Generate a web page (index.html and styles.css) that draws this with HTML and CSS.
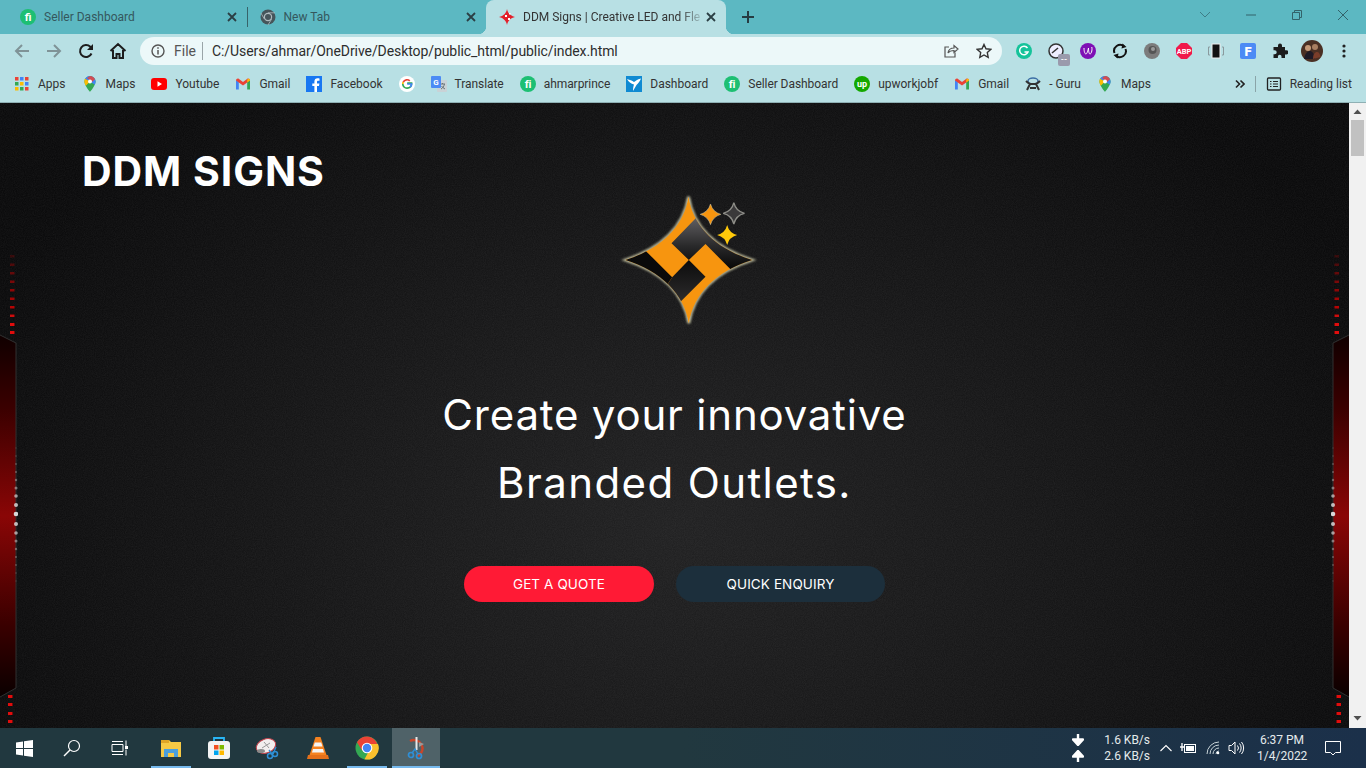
FILE: index.html
```html
<!DOCTYPE html>
<html lang="en">
<head>
	<meta charset="UTF-8">
	<title>DDM Signs | Creative LED and Flex</title>
	<link rel="stylesheet" href="styles.css">
</head>
<body>

	<!-- Shared gradients and filters -->
	<svg class="icon-defs" aria-hidden="true">
		<defs>
			<linearGradient id="panel-red" x1="0" y1="0" x2="0" y2="1">
				<stop offset="0" stop-color="#100000"/>
				<stop offset="0.2" stop-color="#3a0000"/>
				<stop offset="0.5" stop-color="#8a0606"/>
				<stop offset="0.8" stop-color="#3a0000"/>
				<stop offset="1" stop-color="#0a0000"/>
			</linearGradient>
			<linearGradient id="star-dark" gradientUnits="userSpaceOnUse" x1="0" y1="110" x2="0" y2="268">
				<stop offset="0" stop-color="#636164"/>
				<stop offset="0.55" stop-color="#2a2a2b"/>
				<stop offset="1" stop-color="#060606"/>
			</linearGradient>
			<linearGradient id="star-square" gradientUnits="userSpaceOnUse" x1="0" y1="240" x2="0" y2="365">
				<stop offset="0" stop-color="#0c0c0c"/>
				<stop offset="1" stop-color="#2c2b2c"/>
			</linearGradient>
			<clipPath id="star-clip">
				<path d="M264 50C278 140 345 205 455 240 345 275 280 340 265 430 250 340 183 275 75 240 183 205 250 140 264 50z"/>
			</clipPath>
			<filter id="grain" x="0" y="0" width="100%" height="100%">
				<feTurbulence type="fractalNoise" baseFrequency="0.9" numOctaves="2" seed="4"/>
				<feColorMatrix values="0 0 0 0 1  0 0 0 0 1  0 0 0 0 1  0.5 0 0 0 -0.12"/>
			</filter>
			<filter id="logo-glow" x="-20%" y="-20%" width="140%" height="140%">
				<feGaussianBlur stdDeviation="3.5"/>
			</filter>
			<filter id="soft" x="-50%" y="-50%" width="200%" height="200%">
				<feGaussianBlur stdDeviation="0.5"/>
			</filter>
		</defs>
	</svg>

	<!-- Favicon sprite -->
	<svg class="icon-sprite" aria-hidden="true">
		<symbol id="i-fiverr" viewBox="0 0 16 16">
			<circle cx="8" cy="8" r="8" fill="#1dbf73"/>
			<text x="8" y="12" font-family="Roboto, sans-serif" font-size="11" font-weight="700" fill="#fff" text-anchor="middle">fi</text>
		</symbol>
		<symbol id="i-maps" viewBox="0 0 16 16">
			<path d="M8 0a5.6 5.6 0 0 0-5.6 5.6C2.400 9.500 8 16 8 16s5.600-6.500 5.600-10.400A5.600 5.600 0 0 0 8 0z" fill="#34a853"/>
			<path d="M3 3l5 2.600 4.800 3.200c.5-1.100.8-2.200.8-3.200A5.600 5.600 0 0 0 8 0C6 0 4 1.200 3 3z" fill="#4285f4"/>
			<path d="M8 0c2.200 0 4.200 1.300 5 3.200L10 6 5 2z" fill="#ea4335" opacity=".85"/>
			<path d="M3 2.800a5.600 5.600 0 0 0-.6 2.800c0 1.300.6 2.800 1.400 4.200L8 5.600z" fill="#fbbc04"/>
			<circle cx="8" cy="5.600" r="2" fill="#fff"/>
		</symbol>
		<symbol id="i-gmail" viewBox="0 0 16 16">
			<path d="M1 13.500V4l2.800 2v7.500H1.600a.6.600 0 0 1-.6 0z" fill="#4285f4"/>
			<path d="M15 13.500V4l-2.800 2v7.500h2.200a.6.600 0 0 0 .6 0z" fill="#34a853"/>
			<path d="M1 4.500C1 2.800 2.800 2 4 3l4 3 4-3c1.200-1 3-.2 3 1.500L12.200 6.500 8 9.600 3.800 6.500z" fill="#ea4335"/>
			<path d="M12.200 3.800V6.500L15 4.500c0-1.700-1.800-2.500-2.800-.7z" fill="#fbbc04"/>
		</symbol>
		<symbol id="i-close" viewBox="0 0 10 10">
			<path d="M1 1l8 8M9 1L1 9" stroke="#2b3f44" stroke-width="1.800" fill="none"/>
		</symbol>
	</svg>

	<!-- Tab strip -->
	<header class="tabstrip">
		<div class="tab">
			<svg class="favicon"><use href="#i-fiverr"/></svg>
			<span class="tab-title">Seller Dashboard</span>
			<svg class="tab-close"><use href="#i-close"/></svg>
		</div>
		<div class="tab tab-split">
			<svg class="favicon" viewBox="0 0 16 16"><circle cx="8" cy="8" r="7.500" fill="#46555a"/><circle cx="8" cy="8" r="4.200" fill="#b0bcc0"/><circle cx="8" cy="8" r="3" fill="#46555a"/><path d="M8 3.800h7M4.400 10.100L.9 4M11.600 10.100L8 16" stroke="#b0bcc0" stroke-width=".8" fill="none"/></svg>
			<span class="tab-title">New Tab</span>
			<svg class="tab-close"><use href="#i-close"/></svg>
		</div>
		<div class="tab tab-active">
			<svg class="favicon" viewBox="0 0 16 16"><path d="M8 0c.6 4 3.500 7 8 8-4.500 1-7.400 4-8 8-.6-4-3.500-7-8-8 4.500-1 7.400-4 8-8z" fill="#e3202a"/><path d="M6 6h2v2H6zM9 9h2v2H9zM10 4h1.500v1.500H10z" fill="#fff"/></svg>
			<span class="tab-title tab-title-fade">DDM Signs | Creative LED and Fle</span>
			<svg class="tab-close"><use href="#i-close"/></svg>
		</div>
		<span class="new-tab">
			<svg width="14" height="14" viewBox="0 0 14 14"><path d="M7 1v12M1 7h12" stroke="#263c42" stroke-width="2" fill="none"/></svg>
		</span>
		<div class="window-controls">
			<svg width="46" height="16" viewBox="0 0 46 16"><path d="M18 5l5 5 5-5" stroke="#3f7d86" fill="none"/></svg>
			<svg width="46" height="16" viewBox="0 0 46 16"><path d="M18 8h10" stroke="#33626a" fill="none"/></svg>
			<svg width="46" height="16" viewBox="0 0 46 16"><path d="M18.500 5.500h7v7h-7zM20.500 5.500v-2h7v7h-2" stroke="#33626a" fill="none"/></svg>
			<svg width="46" height="16" viewBox="0 0 46 16"><path d="M18 3l10 10M28 3L18 13" stroke="#33626a" fill="none"/></svg>
		</div>
	</header>

	<!-- Toolbar -->
	<div class="toolbar">
		<span class="tool-btn"><svg width="18" height="16" viewBox="0 0 18 16"><path d="M16 8H3M9 2L3 8l6 6" stroke="#7f9397" stroke-width="2" fill="none"/></svg></span>
		<span class="tool-btn"><svg width="18" height="16" viewBox="0 0 18 16"><path d="M2 8h13M9 2l6 6-6 6" stroke="#7f9397" stroke-width="2" fill="none"/></svg></span>
		<span class="tool-btn"><svg width="16" height="16" viewBox="0 0 16 16"><path d="M13.500 10.500A6 6 0 1 1 12.300 3.800L14 5.500" stroke="#1c1c1c" stroke-width="2" fill="none"/><path d="M15 1v6H9z" fill="#1c1c1c"/></svg></span>
		<span class="tool-btn"><svg width="18" height="18" viewBox="0 0 18 18"><path d="M1.500 9L9 2l7.500 7M4 8v8h3.500v-4h3v4H14V8" stroke="#1c1c1c" stroke-width="2" fill="none"/></svg></span>
		<div class="omnibox">
			<svg class="omni-info" width="14" height="14" viewBox="0 0 14 14"><circle cx="7" cy="7" r="6" stroke="#555" stroke-width="1.400" fill="none"/><path d="M7 6v4.500M7 3.200v1.600" stroke="#555" stroke-width="1.500"/></svg>
			<span class="omni-scheme">File</span>
			<span class="omni-url">C:/Users/ahmar/OneDrive/Desktop/public_html/public/index.html</span>
			<svg class="omni-share" width="16" height="16" viewBox="0 0 16 16"><path d="M12 9.500V14H2V4h4" stroke="#555" stroke-width="1.200" fill="none"/><path d="M5 10c.5-3.500 3-5 6-5V2.500L15 6l-4 3.500V7.500C8.500 7.500 6.500 8 5 10z" stroke="#555" stroke-width="1.200" fill="none"/></svg>
			<svg class="omni-star" width="16" height="16" viewBox="0 0 16 16"><path d="M8 1.500l2 4.300 4.700.6-3.400 3.200.9 4.700L8 12l-4.200 2.300.9-4.700L1.300 6.400 6 5.800z" stroke="#333" stroke-width="1.400" fill="none"/></svg>
		</div>
		<div class="extensions">
			<span class="ext"><svg width="16" height="16" viewBox="0 0 16 16"><circle cx="8" cy="8" r="8" fill="#15c39a"/><path d="M11.500 5A4.300 4.300 0 1 0 12 9H8.500" stroke="#fff" stroke-width="1.500" fill="none"/></svg></span>
			<span class="ext"><svg width="16" height="16" viewBox="0 0 16 16"><circle cx="8" cy="8" r="7" fill="#eef" stroke="#333" stroke-width="1.500"/><path d="M4 10l6-5" stroke="#333" stroke-width="1.500"/></svg><b class="ext-badge">--</b></span>
			<span class="ext"><svg width="16" height="16" viewBox="0 0 16 16"><circle cx="8" cy="8" r="8" fill="#7e0fb5"/><path d="M4 5c0 4 1 6 2 6s2-4 2.500-6c0 3 .5 6 1.500 6s2.500-3 1.800-7" stroke="#fff" fill="none"/></svg></span>
			<span class="ext"><svg width="16" height="16" viewBox="0 0 16 16"><path d="M2.500 10A6 6 0 0 1 12 3.300M13.500 6A6 6 0 0 1 4 12.700" stroke="#111" stroke-width="2" fill="none"/><path d="M10.500 0.500l4 3.500-5 1.500zM5.500 15.500l-4-3.500 5-1.500z" fill="#111"/></svg></span>
			<span class="ext"><svg width="16" height="16" viewBox="0 0 16 16"><circle cx="8" cy="8" r="8" fill="#7c7c7c"/><circle cx="8.500" cy="7" r="4" fill="#555"/><circle cx="9" cy="6" r="2" fill="#9a9a9a"/></svg></span>
			<span class="ext"><svg width="16" height="16" viewBox="0 0 16 16"><path d="M5 0h6l5 5v6l-5 5H5l-5-5V5z" fill="#f0194b"/><text x="8" y="10.500" font-family="Roboto, sans-serif" font-size="7.500" font-weight="700" fill="#fff" text-anchor="middle">ABP</text></svg></span>
			<span class="ext"><svg width="18" height="16" viewBox="0 0 18 16"><rect x="5" y="1" width="8" height="14" fill="#111" stroke="#eee"/><path d="M3 4H1.500v8H3M15 4h1.500v8H15" stroke="#8a9a9e" fill="none"/></svg></span>
			<span class="ext"><svg width="16" height="16" viewBox="0 0 16 16"><rect width="16" height="16" rx="2" fill="#4c8bf5"/><text x="8" y="13" font-family="Roboto, sans-serif" font-size="13" font-weight="900" fill="#fff" text-anchor="middle">F</text></svg></span>
			<span class="ext"><svg width="16" height="16" viewBox="0 0 16 16"><path d="M6 2.500a2 2 0 0 1 4 0V4h3v3.200h1.300a2.100 2.100 0 0 1 0 4.200H13V15H9.500v-1.400a1.800 1.800 0 0 0-3.600 0V15H1.500v-3.800h1.200a2 2 0 0 0 0-4H1.500V4H6z" fill="#1c1c1c"/></svg></span>
			<span class="ext"><svg width="22" height="22" viewBox="0 0 22 22"><circle cx="11" cy="11" r="11" fill="#4a3024"/><circle cx="7" cy="8" r="3" fill="#c59a78"/><circle cx="14" cy="7" r="3" fill="#a97f62"/><path d="M3 19c1-6 4-8 6-8s4 2 5 8z" fill="#1e1a26"/><path d="M12 19c0-5 2-7 4-7s3 2 3.500 5z" fill="#7a3d2a"/></svg></span>
			<span class="ext"><svg width="4" height="14" viewBox="0 0 4 14"><circle cx="2" cy="2" r="1.600" fill="#222"/><circle cx="2" cy="7" r="1.600" fill="#222"/><circle cx="2" cy="12" r="1.600" fill="#222"/></svg></span>
		</div>
	</div>

	<!-- Bookmarks -->
	<nav class="bookmarks">
		<a class="bookmark">
			<svg class="favicon" viewBox="0 0 16 16"><path d="M1 1h3.500v3.500H1z" fill="#ea4335"/><path d="M6 1h3.500v3.500H6z" fill="#4285f4"/><path d="M11 1h3.500v3.500H11z" fill="#ea4335"/><path d="M1 6h3.500v3.500H1z" fill="#34a853"/><path d="M6 6h3.500v3.500H6z" fill="#fbbc04"/><path d="M11 6h3.500v3.500H11z" fill="#4285f4"/><path d="M1 11h3.500v3.500H1z" fill="#fbbc04"/><path d="M6 11h3.500v3.500H6z" fill="#34a853"/><path d="M11 11h3.500v3.500H11z" fill="#ea4335"/></svg>
			Apps
		</a>
		<a class="bookmark"><svg class="favicon"><use href="#i-maps"/></svg>Maps</a>
		<a class="bookmark">
			<svg class="favicon" viewBox="0 0 16 16"><rect y="2" width="16" height="12" rx="3" fill="#f00"/><path d="M6.500 5.200L11 8l-4.500 2.800z" fill="#fff"/></svg>
			Youtube
		</a>
		<a class="bookmark"><svg class="favicon"><use href="#i-gmail"/></svg>Gmail</a>
		<a class="bookmark">
			<svg class="favicon" viewBox="0 0 16 16"><rect width="16" height="16" fill="#1877f2"/><path d="M11 16v-6h2l.4-2.500H11V6c0-.8.3-1.200 1.200-1.200h1.300V2.500c-.5-.1-1.200-.2-1.900-.2-2 0-3.200 1.200-3.200 3.300v1.900H6.300V10h2.100v6z" fill="#fff"/></svg>
			Facebook
		</a>
		<a class="bookmark">
			<svg class="favicon" viewBox="0 0 16 16"><circle cx="8" cy="8" r="8" fill="#fff"/><path d="M8.200 7.200h4.400c.3 2.800-1.600 5-4.500 5A4.200 4.200 0 0 1 3.800 8" stroke="#34a853" stroke-width="1.700" fill="none"/><path d="M3.800 8c0-.7.2-1.400.5-2" stroke="#fbbc04" stroke-width="1.700" fill="none"/><path d="M4.300 6a4.200 4.200 0 0 1 6.500-1.200" stroke="#ea4335" stroke-width="1.700" fill="none"/><path d="M8.200 8h4.400c0 1.200-.5 2.300-1.400 3" stroke="#4285f4" stroke-width="1.700" fill="none"/></svg>
		</a>
		<a class="bookmark bookmark-tight">
			<svg class="favicon" viewBox="0 0 16 16"><rect x="6" y="4" width="10" height="12" rx="1" fill="#c9d2d6"/><path d="M9 8h5M11.500 7v1M10 13c2-1 3-3 3.500-5M10.500 10c.8 1.200 2 2.200 3.500 3" stroke="#6b7478" fill="none"/><rect width="10" height="12" rx="1" fill="#4c8bf5"/><text x="5" y="9" font-family="Roboto, sans-serif" font-size="8" font-weight="700" fill="#fff" text-anchor="middle">G</text></svg>
			Translate
		</a>
		<a class="bookmark bookmark-tight"><svg class="favicon"><use href="#i-fiverr"/></svg>ahmarprince</a>
		<a class="bookmark">
			<svg class="favicon" viewBox="0 0 16 16"><rect width="16" height="16" fill="#0f8ad2"/><path d="M1 3c3 1 5 1.500 7 3 1.500-1 3-2.500 7-3.500-1 3-3 5-4.500 6.500L7 15c0-3 .5-5 1-6.500C5 7.500 2.500 6 1 3z" fill="#fff"/></svg>
			Dashboard
		</a>
		<a class="bookmark bookmark-tight"><svg class="favicon"><use href="#i-fiverr"/></svg>Seller Dashboard</a>
		<a class="bookmark">
			<svg class="favicon" viewBox="0 0 16 16"><circle cx="8" cy="8" r="8" fill="#14a800"/><text x="8" y="11" font-family="Roboto, sans-serif" font-size="9" font-weight="700" fill="#fff" text-anchor="middle">up</text></svg>
			upworkjobf
		</a>
		<a class="bookmark"><svg class="favicon"><use href="#i-gmail"/></svg>Gmail</a>
		<a class="bookmark">
			<svg class="favicon" viewBox="0 0 16 16"><ellipse cx="8" cy="5" rx="5" ry="3" fill="none" stroke="#3d6fa5" stroke-width="1.500"/><path d="M1 5c3 3 4 3 7 3s4 0 7-3M5 8l-3 6M11 8l3 6M5 12h6" stroke="#333" stroke-width="2" fill="none"/></svg>
			- Guru
		</a>
		<a class="bookmark"><svg class="favicon"><use href="#i-maps"/></svg>Maps</a>
		<div class="bookmarks-end">
			<svg width="10" height="10" viewBox="0 0 10 10"><path d="M1 1.500L4.500 5 1 8.500M5.500 1.500L9 5 5.500 8.500" stroke="#222" stroke-width="1.600" fill="none"/></svg>
			<span class="bookmarks-sep"></span>
			<a class="bookmark">
				<svg class="favicon" viewBox="0 0 16 16"><rect x="1.500" y="2" width="13" height="12" rx="1" stroke="#222" stroke-width="1.300" fill="none"/><path d="M4 5.500h1.500M7 5.500h5M4 8h1.500M7 8h5M4 10.500h1.500M7 10.500h5" stroke="#222" stroke-width="1.200"/></svg>
				Reading list
			</a>
		</div>
	</nav>

	<!-- Page -->
	<div class="viewport">
		<main class="hero">
			<svg class="grain" aria-hidden="true"><rect width="100%" height="100%" filter="url(#grain)"/></svg>

			<!-- Side light strips, one drawing mirrored -->
			<svg class="strip strip-left" viewBox="0 0 18 480" aria-hidden="true"><use href="#strip-art"/></svg>
			<svg class="strip strip-right" viewBox="0 0 18 480" aria-hidden="true">
				<symbol id="strip-art" viewBox="0 0 18 480">
					<path d="M0 85l16 8v345l-16 9z" fill="url(#panel-red)"/>
					<path d="M0 85l16 8v345l-16 9" fill="none" stroke="#303030"/>
					<g fill="#e00808" filter="url(#soft)">
						<rect x="10" y="5" width="4.500" height="2.500" opacity=".2"/>
						<rect x="10" y="13.500" width="4.500" height="2.500" opacity=".3"/>
						<rect x="10" y="22" width="4.500" height="2.500" opacity=".4"/>
						<rect x="10" y="30.500" width="4.500" height="2.500" opacity=".5"/>
						<rect x="10" y="39" width="4.500" height="2.500" opacity=".6"/>
						<rect x="10" y="47.500" width="4.500" height="2.500" opacity=".7"/>
						<rect x="10" y="56" width="4.500" height="2.500" opacity=".8"/>
						<rect x="10" y="64.500" width="4.500" height="2.500" opacity=".9"/>
						<rect x="10" y="73" width="4.500" height="3"/>
						<rect x="10" y="81" width="4.500" height="3"/>
						<rect x="8" y="445" width="4.500" height="3"/>
						<rect x="8" y="453" width="4.500" height="3"/>
						<rect x="8" y="462" width="4.500" height="3"/>
						<rect x="8" y="470" width="4.500" height="3"/>
					</g>
					<g fill="#d8d8d8" filter="url(#soft)">
						<circle cx="16" cy="198" r=".7" opacity=".2"/>
						<circle cx="16" cy="206" r=".8" opacity=".25"/>
						<circle cx="16" cy="214" r=".9" opacity=".3"/>
						<circle cx="16" cy="222" r="1" opacity=".35"/>
						<circle cx="16" cy="230" r="1.200" opacity=".4"/>
						<circle cx="16" cy="238" r="1.500" opacity=".5"/>
						<circle cx="16" cy="246" r="1.800" opacity=".7"/>
						<circle cx="16" cy="255" r="2" opacity=".85"/>
						<circle cx="16" cy="264" r="2.300"/>
						<circle cx="16" cy="274" r="2" opacity=".85"/>
						<circle cx="16" cy="283" r="1.800" opacity=".7"/>
						<circle cx="16" cy="291" r="1.500" opacity=".5"/>
						<circle cx="16" cy="299" r="1.200" opacity=".4"/>
						<circle cx="16" cy="307" r="1" opacity=".35"/>
						<circle cx="16" cy="315" r=".9" opacity=".3"/>
						<circle cx="16" cy="323" r=".8" opacity=".25"/>
						<circle cx="16" cy="331" r=".7" opacity=".2"/>
					</g>
				</symbol>
				<use href="#strip-art"/>
			</svg>

			<h2 class="brand">DDM SIGNS</h2>

			<svg class="logo" viewBox="0 0 180 140" role="img" aria-label="DDM Signs logo">
				<g transform="translate(15.5 -10) scale(.33333)">
					<path d="M264 50C278 140 345 205 455 240 345 275 280 340 265 430 250 340 183 275 75 240 183 205 250 140 264 50z" fill="none" stroke="#c9c7a6" stroke-width="8" filter="url(#logo-glow)"/>
					<path d="M264 50C278 140 345 205 455 240 345 275 280 340 265 430 250 340 183 275 75 240 183 205 250 140 264 50z" fill="#f7950f"/>
					<g clip-path="url(#star-clip)">
						<path d="M290 110L213 190 265 240 315 192 390 268 480 240 400 90z" fill="url(#star-dark)"/>
						<path d="M60 240L135 212 215 292 190 330z" fill="#0a0a0a"/>
						<path d="M265 240L315 290 240 365 190 330 215 292z" fill="url(#star-square)"/>
					</g>
					<!-- small sparkles -->
					<path d="M330 72Q337 96 361 103 337 110 330 134 323 110 299 103 323 96 330 72z" fill="#f7950f" stroke="#d0cdaa" stroke-opacity=".5" stroke-width="3"/>
					<path d="M400 68Q406 94 432 100 406 106 400 132 394 106 368 100 394 94 400 68z" fill="#3a393a" stroke="#a8a8a0" stroke-opacity=".8" stroke-width="4"/>
					<path d="M380 135Q386 159 410 165 386 171 380 195 374 171 350 165 374 159 380 135z" fill="#ffc90a"/>
				</g>
			</svg>

			<h1 class="headline">
				<span class="headline-line line-one">Create your innovative</span>
				<span class="headline-line line-two">Branded Outlets.</span>
			</h1>

			<div class="actions">
				<a class="btn btn-quote">GET A QUOTE</a>
				<a class="btn btn-enquiry">QUICK ENQUIRY</a>
			</div>
		</main>

		<div class="scrollbar">
			<svg width="17" height="14" viewBox="0 0 17 14"><path d="M4.500 10l4-4.500 4 4.500z" fill="#505050"/></svg>
			<div class="scroll-track"><div class="scroll-thumb"></div></div>
			<svg width="17" height="14" viewBox="0 0 17 14"><path d="M4.500 4l4 4.500 4-4.500z" fill="#505050"/></svg>
		</div>
	</div>

	<!-- Windows taskbar -->
	<footer class="taskbar">
		<span class="task-btn"><svg width="17" height="17" viewBox="0 0 17 17"><path d="M0 2.500l7-1v6.500H0zM8 1.300l9-1.300v8H8zM0 9h7v6.500l-7-1zM8 9h9v8l-9-1.300z" fill="#fff"/></svg></span>
		<span class="task-btn"><svg width="18" height="18" viewBox="0 0 18 18"><circle cx="11" cy="7" r="5.500" stroke="#fff" stroke-width="1.200" fill="none"/><path d="M7 11l-6 6" stroke="#fff" stroke-width="1.400"/></svg></span>
		<span class="task-btn"><svg width="18" height="16" viewBox="0 0 18 16"><path d="M1 4.500h11v7H1zM1 1.500h11M1 14.500h11M15 .500v6M15 9.500v6" stroke="#fff" fill="none"/><rect x="14" y="6" width="3" height="3" fill="#fff"/></svg></span>
		<span class="task-btn task-gap task-open"><svg width="22" height="20" viewBox="0 0 22 20"><path d="M1 2h8l2 2h10v15H1z" fill="#f6c945"/><path d="M1 2h8v3H1z" fill="#e0a526"/><path d="M4 11h14v8H14v-4H8v4H4z" fill="#4b9fdc"/></svg></span>
		<span class="task-btn"><svg width="24" height="24" viewBox="0 0 24 24"><path d="M7 6V2h10v4" stroke="#29b6f6" stroke-width="1.800" fill="none"/><rect x="1" y="5" width="22" height="18" rx="3" fill="#f4f4f4"/><path d="M7 9h4.500v4.500H7z" fill="#f25022"/><path d="M12.500 9H17v4.500h-4.500z" fill="#7fba00"/><path d="M7 14.500h4.500V19H7z" fill="#00a4ef"/><path d="M12.500 14.500H17V19h-4.500z" fill="#ffb900"/></svg></span>
		<span class="task-btn"><svg width="24" height="24" viewBox="0 0 24 24"><ellipse cx="11" cy="10" rx="10" ry="7" transform="rotate(-20 11 10)" fill="#f2eeee" stroke="#c2434c"/><path d="M7 12L15 7M9 6l5 6" stroke="#999" fill="none"/><ellipse cx="6" cy="15" rx="4" ry="2" fill="#8a8a8a"/><circle cx="15" cy="20" r="2.500" stroke="#2f8fd6" stroke-width="1.500" fill="none"/><circle cx="20" cy="18" r="2.500" stroke="#2f8fd6" stroke-width="1.500" fill="none"/><path d="M14 14l3 4M21 11l-3 7" stroke="#2f8fd6" stroke-width="1.300"/></svg></span>
		<span class="task-btn task-gap"><svg width="22" height="24" viewBox="0 0 22 24"><path d="M8.500 1h5l6 18h-17z" fill="#f58220"/><path d="M7.800 6.500h6.400l1.300 4H6.500z" fill="#f4f4f4"/><path d="M6 13h10l1 3.500H5z" fill="#f4f4f4"/><path d="M1 19h20l1 4H0z" fill="#e4701a"/></svg></span>
		<span class="task-btn task-gap-small task-open"><svg width="24" height="24" viewBox="0 0 24 24"><circle cx="12" cy="12" r="11.500" fill="#34a853"/><path d="M12 .500A11.500 11.500 0 0 0 2 6.300L7 14.500l5-2.500h11A11.500 11.500 0 0 0 12 .500z" fill="#ea4335"/><path d="M23 8H12l3 5-5.500 10.200A11.500 11.500 0 0 0 23 8z" fill="#fbc02d"/><circle cx="12" cy="12" r="5.300" fill="#fff"/><circle cx="12" cy="12" r="4.200" fill="#4285f4"/></svg></span>
		<span class="task-btn task-gap-small task-active"><svg width="22" height="24" viewBox="0 0 22 24"><path d="M5 5a8.500 8.500 0 1 1 8 15" stroke="#c9452a" stroke-width="2.500" fill="none"/><path d="M10.500 1h2v13h-2z" fill="#e8e8e8"/><path d="M14 6l5 2-5 3z" fill="#999"/><circle cx="6" cy="19" r="2.500" stroke="#2f8fd6" stroke-width="1.700" fill="none"/><circle cx="14" cy="20" r="2.500" stroke="#2f8fd6" stroke-width="1.700" fill="none"/><path d="M7 17l3-4 3 5" stroke="#2f8fd6" stroke-width="1.400" fill="none"/></svg></span>

		<div class="tray">
			<span class="net-arrows">
				<svg width="12" height="12" viewBox="0 0 12 12"><path d="M6 0v6M1 5.500h10L6 11z" stroke="#fff" stroke-width="2.400" fill="#fff" stroke-linejoin="round"/></svg>
				<svg width="12" height="12" viewBox="0 0 12 12"><path d="M6 12V6M1 6.500h10L6 1z" stroke="#fff" stroke-width="2.400" fill="#fff" stroke-linejoin="round"/></svg>
			</span>
			<span class="net-speed">1.6 KB/s<br>2.6 KB/s</span>
			<svg class="tray-caret" width="12" height="8" viewBox="0 0 12 8"><path d="M.500 7L6 1.500 11.500 7" stroke="#fff" stroke-width="1.100" fill="none"/></svg>
			<svg class="tray-battery" width="16" height="12" viewBox="0 0 16 12"><rect x="4.500" y="2.500" width="11" height="8" stroke="#fff" fill="none"/><rect x="6" y="4" width="8" height="5" fill="#fff"/><path d="M0 5h4M2 1v8" stroke="#fff" stroke-width="1.300"/></svg>
			<svg class="tray-wifi" width="14" height="14" viewBox="0 0 14 14"><path d="M1 13A12 12 0 0 1 13 1M4 13a9 9 0 0 1 9-9M7 13a6 6 0 0 1 6-6M10 13a3 3 0 0 1 3-3" stroke="#c8d4d8" fill="none"/><circle cx="12" cy="12" r="1.300" fill="#fff"/></svg>
			<svg class="tray-sound" width="17" height="14" viewBox="0 0 17 14"><path d="M1 4.500h2.500L7 1v12L3.500 9.500H1z" stroke="#fff" fill="none"/><path d="M9.500 4.500a4 4 0 0 1 0 5M11.500 2.500a7 7 0 0 1 0 9M13.500 1a9.500 9.500 0 0 1 0 12" stroke="#fff" fill="none"/></svg>
			<span class="clock">6:37 PM<br>1/4/2022</span>
			<svg class="tray-note" width="16" height="16" viewBox="0 0 16 16"><path d="M.500 1.500h15v11h-5L8 15l-2.500-2.500h-5z" stroke="#fff" fill="none"/></svg>
		</div>
	</footer>

</body>
</html>
```

FILE: styles.css
```css
/* Global */
body {
	margin: 0;
	height: 100vh;
	overflow: hidden;
	display: flex;
	flex-direction: column;
	font-family: Roboto, "Liberation Sans", sans-serif;
	font-size: 12px;
	color: #333;
	background: #000;
}

.icon-defs {
	position: absolute;
	width: 0;
	height: 0;
}

.icon-sprite {
	display: none;
}

.favicon {
	width: 16px;
	height: 16px;
	flex: none;
}

/* Tab strip */
.tabstrip {
	height: 34px;
	flex: none;
	display: flex;
	align-items: stretch;
	padding-left: 7px;
	background: #5cb8c2;
}

.tab {
	width: 239.5px;
	flex: none;
	box-sizing: border-box;
	display: flex;
	align-items: center;
	padding: 0 10px 0 13px;
	position: relative;
	color: #35575d;
}

.tab-split::before {
	content: "";
	position: absolute;
	left: 0;
	top: 7px;
	height: 20px;
	border-left: 1px solid #37636a;
}

.tab-title {
	flex: 1;
	margin-left: 8px;
	white-space: nowrap;
	overflow: hidden;
}

.tab-close {
	width: 10px;
	height: 10px;
	flex: none;
}

.tab-active {
	background: #b8e0e4;
	border-radius: 8px 8px 0 0;
	color: #333;
}

.tab-active::before,
.tab-active::after {
	content: "";
	position: absolute;
	bottom: 0;
	width: 8px;
	height: 8px;
}

.tab-active::before {
	left: -8px;
	background: radial-gradient(circle at 0 0, transparent 8px, #b8e0e4 8.5px);
}

.tab-active::after {
	right: -8px;
	background: radial-gradient(circle at 100% 0, transparent 8px, #b8e0e4 8.5px);
}

.tab-title-fade {
	-webkit-mask-image: linear-gradient(to right, #000 85%, transparent 100%);
	mask-image: linear-gradient(to right, #000 85%, transparent 100%);
}

.new-tab {
	display: flex;
	align-items: center;
	margin-left: 15px;
}

.window-controls {
	margin-left: auto;
	display: flex;
	align-items: center;
	height: 30px;
}

/* Toolbar */
.toolbar {
	height: 34px;
	flex: none;
	display: flex;
	align-items: center;
	padding-left: 6px;
	background: #b8e0e4;
}

.tool-btn {
	width: 32px;
	display: flex;
	justify-content: center;
	align-items: center;
}

.omnibox {
	width: 862px;
	height: 28px;
	margin-left: 6px;
	display: flex;
	align-items: center;
	border-radius: 14px;
	background: #ecf8f9;
	font-size: 14px;
}

.omni-info {
	margin-left: 11px;
}

.omni-scheme {
	margin-left: 9px;
	padding-right: 6px;
	border-right: 1px solid #9aa5a8;
	line-height: 18px;
	color: #555;
}

.omni-url {
	flex: 1;
	margin-left: 9px;
	color: #2d2d2d;
	letter-spacing: -0.08px;
}

.omni-share {
	margin-right: 17px;
}

.omni-star {
	margin-right: 10px;
}

.extensions {
	display: flex;
	align-items: center;
	margin-left: 6px;
}

.ext {
	width: 32px;
	display: flex;
	justify-content: center;
	align-items: center;
	position: relative;
}

.ext-badge {
	position: absolute;
	left: 18px;
	top: 11px;
	width: 12px;
	height: 12px;
	background: #9a9aac;
	border-radius: 2px;
	color: #fff;
	font-size: 8px;
	line-height: 12px;
	text-align: center;
}

/* Bookmarks */
.bookmarks {
	height: 35px;
	flex: none;
	box-sizing: border-box;
	display: flex;
	align-items: center;
	gap: 16px;
	padding: 0 14px 2px 14px;
	background: #b8e0e4;
	border-bottom: 1px solid #8fb0b4;
}

.bookmark {
	display: flex;
	align-items: center;
	gap: 8px;
	white-space: nowrap;
}

.bookmark-tight {
	letter-spacing: -0.06px;
}

.bookmarks-end {
	margin-left: auto;
	display: flex;
	align-items: center;
}

.bookmarks-sep {
	height: 16px;
	margin: 0 10px;
	border-left: 1px solid #8aa4a8;
}

/* Page */
.viewport {
	flex: 1;
	min-height: 0;
	display: flex;
}

.hero {
	flex: 1;
	position: relative;
	overflow: hidden;
	display: flex;
	flex-direction: column;
	align-items: center;
	color: #fff;
	font-family: Inter, "Open Sans", sans-serif;
	background: radial-gradient(ellipse 760px 560px at 50% 68%, #222223 0%, #171718 50%, #0b0b0c 100%);
}

.grain {
	position: absolute;
	top: 0;
	left: 0;
	width: 100%;
	height: 100%;
	opacity: 0.14;
}

.strip {
	position: absolute;
	top: 147px;
	width: 18px;
	height: 480px;
}

.strip-left {
	left: 0;
}

.strip-right {
	right: 0;
	transform: scaleX(-1);
}

.brand,
.logo,
.headline,
.actions {
	position: relative;
}

.brand {
	align-self: flex-start;
	margin: 44px 0 0 82px;
	font-size: 41px;
	line-height: 48px;
	font-weight: 700;
	letter-spacing: 0.95px;
}

.logo {
	width: 180px;
	height: 140px;
	margin-top: -5px;
}

.headline {
	margin: 51px 0 0;
	font-size: 42px;
	line-height: 68px;
	font-weight: 400;
	text-align: center;
}

.headline-line {
	display: block;
}

.line-one {
	letter-spacing: 0.8px;
}

.line-two {
	letter-spacing: 1.4px;
}

.actions {
	display: flex;
	gap: 22px;
	margin-top: 49px;
}

.btn {
	height: 36px;
	border-radius: 18px;
	display: flex;
	align-items: center;
	justify-content: center;
	font-size: 13.5px;
	font-weight: 400;
	letter-spacing: 0.1px;
}

.btn-quote {
	width: 190px;
	background: #ff1a35;
}

.btn-enquiry {
	width: 209px;
	background: #1c2f3c;
}

/* Scrollbar */
.scrollbar {
	width: 17px;
	flex: none;
	display: flex;
	flex-direction: column;
	justify-content: space-between;
	background: #f1f1f1;
	padding: 1px 0 2px;
	box-sizing: border-box;
}

.scroll-track {
	flex: 1;
	padding-top: 2px;
}

.scroll-thumb {
	height: 36px;
	margin: 0 2px;
	background: #c1c1c1;
}

/* Taskbar */
.taskbar {
	height: 40px;
	flex: none;
	display: flex;
	align-items: stretch;
	background: linear-gradient(to right, #21383f 0%, #21383f 50%, #1b304a 100%);
	color: #fff;
}

.task-btn {
	width: 48px;
	flex: none;
	box-sizing: border-box;
	display: flex;
	align-items: center;
	justify-content: center;
	position: relative;
}

.task-gap {
	margin-left: 3px;
}

.task-gap-small {
	margin-left: 1px;
}

.task-open::after {
	content: "";
	position: absolute;
	left: 4px;
	right: 4px;
	bottom: 0;
	height: 2px;
	background: #76b9ed;
}

.task-active {
	background: #4f6268;
	box-shadow: inset 0 -2px 0 #76b9ed;
}

.tray {
	margin-left: auto;
	display: flex;
	align-items: center;
}

.net-arrows {
	display: flex;
	flex-direction: column;
	gap: 4px;
}

.net-speed {
	margin-left: 20px;
	line-height: 16px;
	text-align: right;
	color: #e4eaec;
}

.tray-caret {
	margin-left: 10px;
}

.tray-battery {
	margin-left: 8px;
}

.tray-wifi {
	margin-left: 10px;
}

.tray-sound {
	margin-left: 8px;
}

.clock {
	width: 50px;
	margin-left: 12px;
	line-height: 16px;
	text-align: center;
	color: #e4eaec;
}

.tray-note {
	margin: 0 25px 0 18px;
}
```
